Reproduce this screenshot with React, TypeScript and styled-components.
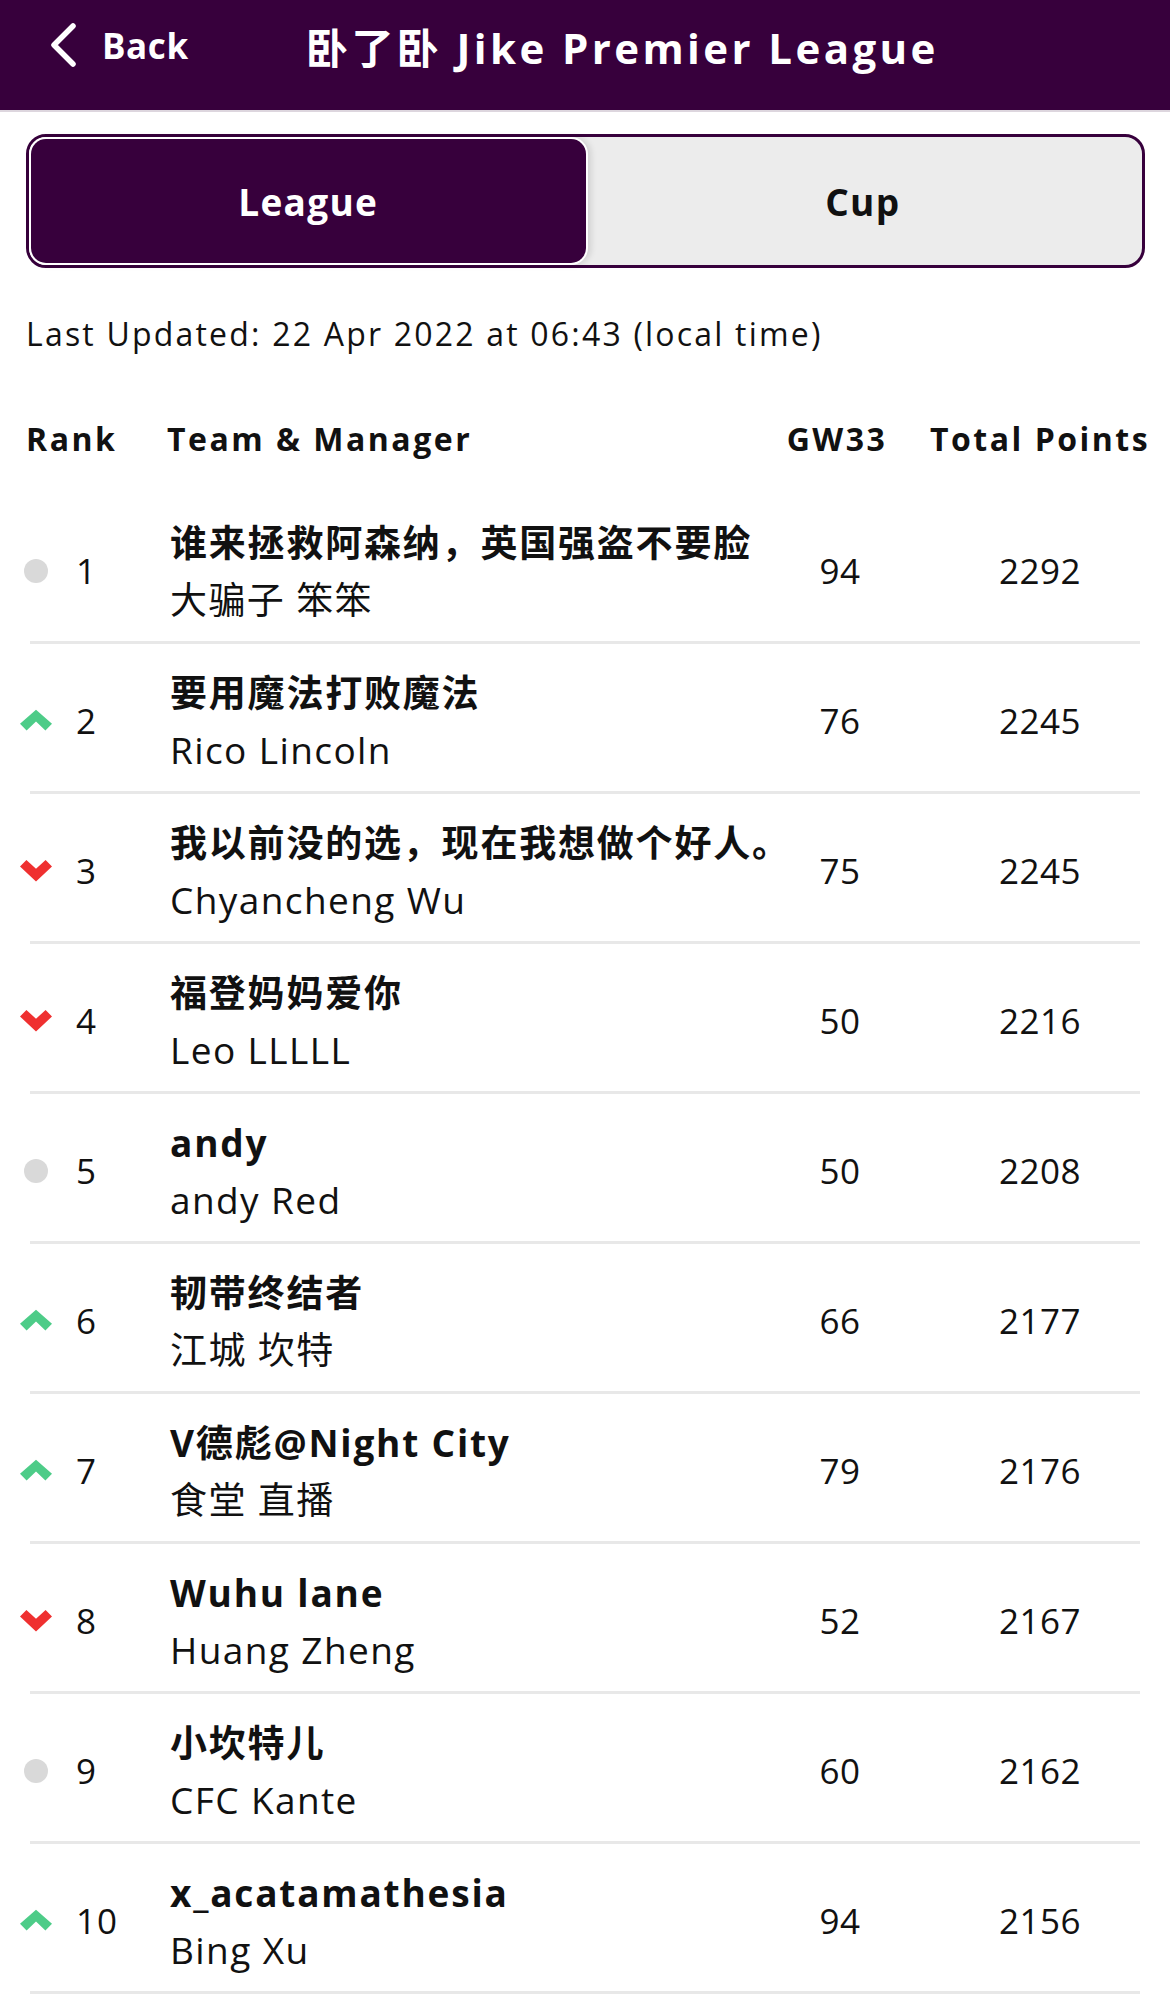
import React from "react";
import styled, { createGlobalStyle } from "styled-components";

const Global = createGlobalStyle`
  html, body { margin: 0; padding: 0; background: #ffffff; }
  body {
    font-family: "Open Sans", "Noto Sans CJK SC", sans-serif;
    color: #111111;
    -webkit-font-smoothing: antialiased;
  }
  * { box-sizing: border-box; }
`;

const Page = styled.div`
  width: 1170px;
  min-height: 2010px;
  background: #ffffff;
  overflow: hidden;
`;

const Header = styled.header`
  height: 112px;
  background: #37003c;
  border-bottom: 2px solid #ddd6de;
  display: flex;
  align-items: center;
  padding: 0 0 20px 48px;
  color: #ffffff;
`;

const BackButton = styled.div`
  flex-shrink: 0;
  display: flex;
  align-items: center;
  gap: 24px;
  font-size: 35px;
  font-weight: 700;
  letter-spacing: 0.6px;
  width: 258px;
`;

const Title = styled.h1`
  margin: 0;
  font-size: 42px;
  font-weight: 700;
  letter-spacing: 3.4px;
  white-space: nowrap;
`;

const Toggle = styled.div`
  margin: 22px 25px 0 26px;
  height: 134px;
  border: 3px solid #37003c;
  border-radius: 20px;
  background: #ececec;
  padding: 2px;
  display: flex;
`;

const ToggleOption = styled.div<{ $active?: boolean }>`
  flex: 1;
  display: flex;
  align-items: center;
  justify-content: center;
  font-size: 37px;
  font-weight: 700;
  letter-spacing: 1.3px;
  border-radius: 15px;
  color: ${(p) => (p.$active ? "#ffffff" : "#111111")};
  background: ${(p) => (p.$active ? "#37003c" : "transparent")};
  box-shadow: ${(p) =>
    p.$active ? "0 0 0 2px #ffffff, 3px 0 6px 2px rgba(0,0,0,0.12)" : "none"};
`;

const Updated = styled.p`
  margin: 46px 0 0 26px;
  font-size: 32px;
  line-height: 40px;
  letter-spacing: 2.2px;
  white-space: nowrap;
`;

const HeadRow = styled.div`
  margin: 64px 26px 36px 26px;
  display: flex;
  align-items: center;
  height: 40px;
  font-size: 32px;
  font-weight: 700;
  letter-spacing: 2.5px;
`;

const HeadRank = styled.div`
  flex-shrink: 0;
  width: 141px;
`;

const HeadTeam = styled.div`
  flex: 1;
  min-width: 0;
`;

const HeadCol = styled.div<{ $w: number; $ml?: number }>`
  flex-shrink: 0;
  width: ${(p) => p.$w}px;
  margin-left: ${(p) => p.$ml ?? 0}px;
  text-align: center;
  white-space: nowrap;
`;

const Row = styled.div`
  margin: 0 30px;
  height: 150px;
  padding-top: 6px;
  border-bottom: 3px solid #e8e8e8;
  display: flex;
  align-items: center;
`;

const MoveCell = styled.div`
  flex-shrink: 0;
  margin-left: -10px;
  width: 32px;
  display: flex;
  justify-content: center;
  align-items: center;
`;

const Dot = styled.span`
  width: 24px;
  height: 24px;
  border-radius: 50%;
  background: #d9d9d9;
`;

const RankNum = styled.div`
  flex-shrink: 0;
  margin-left: 24px;
  width: 94px;
  font-size: 35px;
  letter-spacing: 1px;
`;

const TeamCell = styled.div`
  flex: 1;
  min-width: 0;
  display: flex;
  flex-direction: column;
  white-space: nowrap;
  letter-spacing: 1.8px;
`;

const TeamName = styled.div`
  font-size: 37px;
  font-weight: 700;
  line-height: 57px;
`;

const Manager = styled.div`
  font-size: 37px;
  line-height: 57px;
  letter-spacing: 1.4px;
`;

const NumCell = styled.div<{ $w: number; $ml?: number }>`
  flex-shrink: 0;
  width: ${(p) => p.$w}px;
  margin-left: ${(p) => p.$ml ?? 0}px;
  text-align: center;
  font-size: 35px;
  letter-spacing: 0.5px;
`;

type Move = "up" | "down" | "same";

const UpArrow = () => (
  <svg width="34" height="23" viewBox="0 0 34 23">
    <polygon points="0,15 17,0 34,15 27,22 17,12.5 7,22" fill="#4dcc88" />
  </svg>
);

const DownArrow = () => (
  <svg width="35" height="24" viewBox="0 0 35 24">
    <polygon points="0,7 7,0 17.5,9.5 28,0 35,7 17.5,23.5" fill="#ef3030" />
  </svg>
);

const BackChevron = () => (
  <svg width="30" height="44" viewBox="0 0 30 44">
    <path
      d="M25 3 L6 22 L25 41"
      fill="none"
      stroke="#ffffff"
      strokeWidth="5.5"
      strokeLinecap="round"
      strokeLinejoin="round"
    />
  </svg>
);

const rows: { rank: number; move: Move; team: string; manager: string; gw: number; total: number }[] = [
  { rank: 1, move: "same", team: "谁来拯救阿森纳，英国强盗不要脸", manager: "大骗子 笨笨", gw: 94, total: 2292 },
  { rank: 2, move: "up", team: "要用魔法打败魔法", manager: "Rico Lincoln", gw: 76, total: 2245 },
  { rank: 3, move: "down", team: "我以前没的选，现在我想做个好人。", manager: "Chyancheng Wu", gw: 75, total: 2245 },
  { rank: 4, move: "down", team: "福登妈妈爱你", manager: "Leo LLLLL", gw: 50, total: 2216 },
  { rank: 5, move: "same", team: "andy", manager: "andy Red", gw: 50, total: 2208 },
  { rank: 6, move: "up", team: "韧带终结者", manager: "江城 坎特", gw: 66, total: 2177 },
  { rank: 7, move: "up", team: "V德彪@Night City", manager: "食堂 直播", gw: 79, total: 2176 },
  { rank: 8, move: "down", team: "Wuhu lane", manager: "Huang Zheng", gw: 52, total: 2167 },
  { rank: 9, move: "same", team: "小坎特儿", manager: "CFC Kante", gw: 60, total: 2162 },
  { rank: 10, move: "up", team: "x_acatamathesia", manager: "Bing Xu", gw: 94, total: 2156 },
];

export default function App() {
  return (
    <Page>
      <Global />
      <Header>
        <BackButton>
          <BackChevron />
          <span>Back</span>
        </BackButton>
        <Title>卧了卧 Jike Premier League</Title>
      </Header>
      <Toggle>
        <ToggleOption $active>League</ToggleOption>
        <ToggleOption>Cup</ToggleOption>
      </Toggle>
      <Updated>Last Updated: 22 Apr 2022 at 06:43 (local time)</Updated>
      <HeadRow>
        <HeadRank>Rank</HeadRank>
        <HeadTeam>Team &amp; Manager</HeadTeam>
        <HeadCol $w={120}>GW33</HeadCol>
        <HeadCol $w={214} $ml={33}>Total Points</HeadCol>
      </HeadRow>
      {rows.map((r) => (
        <Row key={r.rank}>
          <MoveCell>
            {r.move === "up" ? <UpArrow /> : r.move === "down" ? <DownArrow /> : <Dot />}
          </MoveCell>
          <RankNum>{r.rank}</RankNum>
          <TeamCell>
            <TeamName>{r.team}</TeamName>
            <Manager>{r.manager}</Manager>
          </TeamCell>
          <NumCell $w={120}>{r.gw}</NumCell>
          <NumCell $w={200} $ml={40}>{r.total}</NumCell>
        </Row>
      ))}
    </Page>
  );
}
